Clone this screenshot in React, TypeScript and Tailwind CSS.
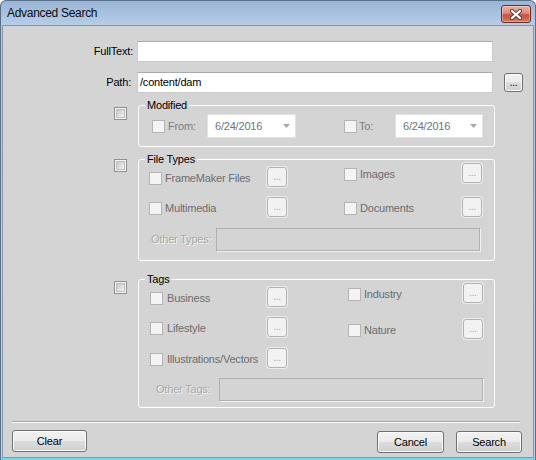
import React from "react";

function Cb({ enabled }: { enabled?: boolean }) {
  if (enabled)
    return (
      <span className="flex h-[13px] w-[13px] shrink-0 items-center justify-center border border-[#8e8f8f] bg-[#f6f6f6]">
        <span className="block h-[9px] w-[9px] border border-[#bdbdbd] bg-linear-to-br from-[#c8c8c8] to-[#f3f3f3]" />
      </span>
    );
  return <span className="block h-[13px] w-[13px] shrink-0 border border-[#b4b4b4] bg-[#f4f4f4]" />;
}

function DotsBtn({ enabled }: { enabled?: boolean }) {
  if (enabled)
    return (
      <span className="flex h-[19px] w-[19px] shrink-0 items-end justify-center rounded-[3px] border border-[#707070] bg-[linear-gradient(#f2f2f2_0%,#ebebeb_50%,#dddddd_50%,#cfcfcf_100%)] pb-[3px] text-[10px] leading-none text-black shadow-[inset_0_0_0_1px_#fafafa]">
        ...
      </span>
    );
  return (
    <span className="flex h-[20px] w-[20px] shrink-0 items-end justify-center rounded-[3px] border border-[#b0b3b6] bg-[#f2f2f2] pb-[4px] text-[10px] leading-none text-[#a6a6a6] shadow-[0_0_0_1px_#ececec]">
      ...
    </span>
  );
}

function Item({ label, w, lm = 3 }: { label: string; w: number; lm?: number }) {
  return (
    <div className="flex h-[20px] items-center">
      <div className="flex items-center" style={{ width: w }}>
        <span className="mt-[2px]">
          <Cb />
        </span>
        <span className="mt-[2px] text-[#6d6d6d]" style={{ marginLeft: lm }}>
          {label}
        </span>
      </div>
      <DotsBtn />
    </div>
  );
}

function DateBox({ w }: { w: number }) {
  return (
    <div
      className="flex h-[24px] items-center justify-between border border-[#e2e2e2] bg-white pl-[7px] pr-[4px] text-[#6e7380]"
      style={{ width: w }}
    >
      <span>6/24/2016</span>
      <svg width="8" height="4" viewBox="0 0 8 4">
        <path d="M0 0 H7 L3.5 4 Z" fill="#a9a9a9" />
      </svg>
    </div>
  );
}

function Button({ label, w, h = 22 }: { label: string; w: number; h?: number }) {
  return (
    <div
      className="flex items-center justify-center rounded-[3px] border border-[#707070] bg-[linear-gradient(#f2f2f2_0%,#ebebeb_50%,#dddddd_50%,#cfcfcf_100%)] text-black shadow-[inset_0_0_0_1px_#fbfbfb]"
      style={{ width: w, height: h }}
    >
      {label}
    </div>
  );
}

function GroupLabel({ text }: { text: string }) {
  return (
    <span className="absolute -top-[7px] left-[6px] bg-[#d4d4d4] px-[2px] leading-[13px] text-black">{text}</span>
  );
}

export default function App() {
  return (
    <div className="h-[460px] w-[536px] overflow-hidden bg-white font-['Liberation_Sans',Arial,sans-serif] text-[11px] tracking-[-0.2px]">
      <div className="flex h-full flex-col rounded-t-[6px] border-x border-t border-[#5b6f86] bg-[linear-gradient(#9ab5d5_0px,#b6cde7_24px,#bcd3eb_100%)]">
        {/* title bar */}
        <div className="flex h-[24px] shrink-0 items-start justify-between pl-[6px] pr-[4px]">
          <span className="mt-[5px] text-[12px] leading-[15px] tracking-[-0.3px] text-[#0c0c0c]">Advanced Search</span>
          <div className="mt-[4px] flex h-[18px] w-[30px] items-center justify-center rounded-[3px] border border-[#6a2b25] bg-[linear-gradient(#eab0a4_0%,#de8b7c_45%,#c8503e_55%,#d6775f_100%)] shadow-[inset_0_0_0_1px_rgba(255,255,255,0.35)]">
            <svg width="14" height="11" viewBox="0 0 14 11">
              <path d="M3 2 L11 9 M11 2 L3 9" stroke="#4a4a4a" strokeWidth="4.2" strokeLinecap="round" />
              <path d="M3 2 L11 9 M11 2 L3 9" stroke="#ffffff" strokeWidth="2.2" strokeLinecap="round" />
            </svg>
          </div>
        </div>

        {/* client */}
        <div className="mx-[1px] flex flex-1 flex-col border border-[#8397ad] bg-[#d4d4d4]">
          {/* FullText */}
          <div className="mt-[15px] flex items-center">
            <span className="w-[130px] text-right text-black">FullText:</span>
            <div className="ml-[4px] h-[21px] w-[356px] border border-[#c9ccd1] border-t-[#a7aaaf] bg-white" />
          </div>
          {/* Path */}
          <div className="mt-[10px] flex items-center">
            <span className="w-[130px] pr-[2px] text-right text-black">Path:</span>
            <div className="ml-[4px] flex h-[21px] w-[356px] items-center border border-[#c9ccd1] border-t-[#a7aaaf] bg-white pl-[2px] text-black">
              /content/dam
            </div>
            <span className="ml-[11px]">
              <DotsBtn enabled />
            </span>
          </div>

          {/* Modified */}
          <div className="mt-[12px] flex items-start">
            <span className="ml-[111px] mt-[2px]">
              <Cb enabled />
            </span>
            <div className="relative ml-[11px] h-[42px] w-[357px] rounded-[3px] border border-white">
              <GroupLabel text="Modified" />
              <div className="mt-[8px] flex items-center pl-[13px]">
                <div className="flex w-[55px] items-center">
                  <Cb />
                  <span className="ml-[3px] text-[#7d7d7d]">From:</span>
                </div>
                <DateBox w={89} />
                <div className="ml-[48px] flex w-[51px] items-center">
                  <Cb />
                  <span className="ml-[2px] text-[#7d7d7d]">To:</span>
                </div>
                <DateBox w={88} />
              </div>
            </div>
          </div>

          {/* File Types */}
          <div className="mt-[12px] flex items-start">
            <span className="ml-[111px]">
              <Cb enabled />
            </span>
            <div className="relative ml-[11px] h-[102px] w-[357px] rounded-[3px] border border-white">
              <GroupLabel text="File Types" />
              <div className="flex pl-[10px]">
                <div className="flex flex-col">
                  <div className="mt-[7px]">
                    <Item label="FrameMaker Files" w={118} />
                  </div>
                  <div className="mt-[10px]">
                    <Item label="Multimedia" w={118} />
                  </div>
                </div>
                <div className="ml-[57px] flex flex-col">
                  <div className="mt-[3px]">
                    <Item label="Images" w={118} />
                  </div>
                  <div className="mt-[14px]">
                    <Item label="Documents" w={118} />
                  </div>
                </div>
              </div>
              <div className="mt-[11px] flex items-center pl-[12px]">
                <span className="w-[65px] text-[#a9a9a9] [text-shadow:1px_1px_0_#f4f4f4]">Other Types:</span>
                <div className="h-[23px] w-[264px] border border-[#b0b0b0] shadow-[1px_1px_0_#f2f2f2]" />
              </div>
            </div>
          </div>

          {/* Tags */}
          <div className="mt-[18px] flex items-start">
            <span className="ml-[111px] mt-[2px]">
              <Cb enabled />
            </span>
            <div className="relative ml-[11px] h-[129px] w-[357px] rounded-[3px] border border-white">
              <GroupLabel text="Tags" />
              <div className="flex pl-[11px]">
                <div className="flex flex-col">
                  <div className="mt-[7px]">
                    <Item label="Business" w={117} lm={4} />
                  </div>
                  <div className="mt-[10px]">
                    <Item label="Lifestyle" w={117} lm={4} />
                  </div>
                  <div className="mt-[11px]">
                    <Item label="Illustrations/Vectors" w={117} lm={4} />
                  </div>
                </div>
                <div className="ml-[61px] flex flex-col">
                  <div className="mt-[3px]">
                    <Item label="Industry" w={115} lm={3} />
                  </div>
                  <div className="mt-[16px]">
                    <Item label="Nature" w={115} lm={3} />
                  </div>
                </div>
              </div>
              <div className="mt-[10px] flex items-center pl-[17px]">
                <span className="w-[63px] text-[#a9a9a9] [text-shadow:1px_1px_0_#f4f4f4]">Other Tags:</span>
                <div className="h-[23px] w-[264px] border border-[#b0b0b0] shadow-[1px_1px_0_#f2f2f2]" />
              </div>
            </div>
          </div>

          {/* separator */}
          <div className="ml-[9px] mt-[13px] h-[2px] w-[508px] border-t border-b border-t-[#a3a3a3] border-b-white" />

          {/* buttons */}
          <div className="mt-[7px] flex items-start justify-between pl-[9px] pr-[11px]">
            <Button label="Clear" w={75} />
            <div className="mt-[1px] flex gap-[12px]">
              <Button label="Cancel" w={67} />
              <Button label="Search" w={66} />
            </div>
          </div>
        </div>
        <div className="h-[2px] shrink-0 bg-[#7fd3f2]" />
      </div>
    </div>
  );
}
